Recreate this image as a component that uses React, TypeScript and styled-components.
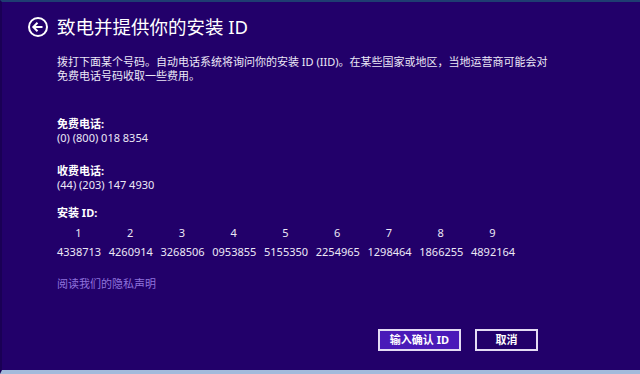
import React from "react";
import styled, { createGlobalStyle } from "styled-components";

const GlobalStyle = createGlobalStyle`
  html, body {
    margin: 0;
    padding: 0;
    background: #22006a;
  }
  body {
    font-family: "Segoe UI", "Noto Sans", "Noto Sans CJK SC", sans-serif;
  }
`;

const Frame = styled.div`
  box-sizing: border-box;
  width: 640px;
  height: 374px;
  display: flex;
  flex-direction: column;
  background: #22006a;
  border-top: 2px solid #1f3d72;
  border-bottom: 4px solid #a3badb;
  border-left: 2px solid #1a0055;
  color: #ece8f6;
  overflow: hidden;
`;

const Header = styled.div`
  display: flex;
  align-items: center;
  gap: 8px;
  padding: 13px 0 0 25px;
  height: 24px;
`;

const Title = styled.h1`
  margin: 0;
  font-size: 18.5px;
  line-height: 24px;
  font-weight: 400;
  color: #ffffff;
  font-family: "Segoe UI", "Noto Sans", "Noto Sans CJK SC", sans-serif;
`;

const Body = styled.div`
  display: flex;
  flex-direction: column;
  padding-left: 55px;
  font-size: 11px;
  line-height: 14px;
`;

const Para = styled.p`
  margin: 16px 0 0;
  width: 500px;
`;

const Label = styled.div<{ $gap: number }>`
  margin-top: ${(p) => p.$gap}px;
  font-weight: 700;
  color: #ffffff;
`;

const Value = styled.div``;

const IdGrid = styled.div`
  display: grid;
  grid-template-columns: repeat(9, 43px);
  column-gap: 8.75px;
  row-gap: 5px;
  margin-top: 6px;
  text-align: center;
  white-space: nowrap;
`;

const Link = styled.a`
  margin-top: 18px;
  color: #8f72dc;
  text-decoration: none;
  cursor: pointer;
`;

const Footer = styled.div`
  display: flex;
  justify-content: flex-end;
  gap: 14px;
  margin-top: 38px;
  padding-right: 102px;
`;

const Button = styled.button<{ $primary?: boolean }>`
  box-sizing: border-box;
  height: 22px;
  min-width: ${(p) => (p.$primary ? 78 : 63)}px;
  padding: 0 10px;
  border: 2px solid #e4dcf4;
  background: ${(p) => (p.$primary ? "#4a1ab8" : "transparent")};
  color: #ffffff;
  font-family: "Segoe UI", "Noto Sans", "Noto Sans CJK SC", sans-serif;
  font-size: 11px;
  font-weight: 700;
  line-height: 18px;
  cursor: pointer;
`;

const BackIcon = () => (
  <svg width="22" height="22" viewBox="0 0 22 22" fill="none">
    <circle cx="11" cy="11" r="9" stroke="#fff" strokeWidth="2" />
    <path d="M6.5 11h9" stroke="#fff" strokeWidth="2" />
    <path d="M10.5 6.8L6.3 11l4.2 4.2" stroke="#fff" strokeWidth="2" />
  </svg>
);

const ids = [
  "4338713",
  "4260914",
  "3268506",
  "0953855",
  "5155350",
  "2254965",
  "1298464",
  "1866255",
  "4892164",
];

export default function App() {
  return (
    <>
      <GlobalStyle />
      <Frame>
        <Header>
          <BackIcon />
          <Title>致电并提供你的安装 ID</Title>
        </Header>
        <Body>
          <Para>
            拨打下面某个号码。自动电话系统将询问你的安装 ID (IID)。在某些国家或地区，当地运营商可能会对免费电话号码收取一些费用。
          </Para>
          <Label $gap={34}>免费电话:</Label>
          <Value>(0) (800) 018 8354</Value>
          <Label $gap={19}>收费电话:</Label>
          <Value>(44) (203) 147 4930</Value>
          <Label $gap={14}>安装 ID:</Label>
          <IdGrid>
            {ids.map((_, i) => (
              <span key={"h" + i}>{i + 1}</span>
            ))}
            {ids.map((id) => (
              <span key={id}>{id}</span>
            ))}
          </IdGrid>
          <Link>阅读我们的隐私声明</Link>
        </Body>
        <Footer>
          <Button $primary>输入确认 ID</Button>
          <Button>取消</Button>
        </Footer>
      </Frame>
    </>
  );
}
